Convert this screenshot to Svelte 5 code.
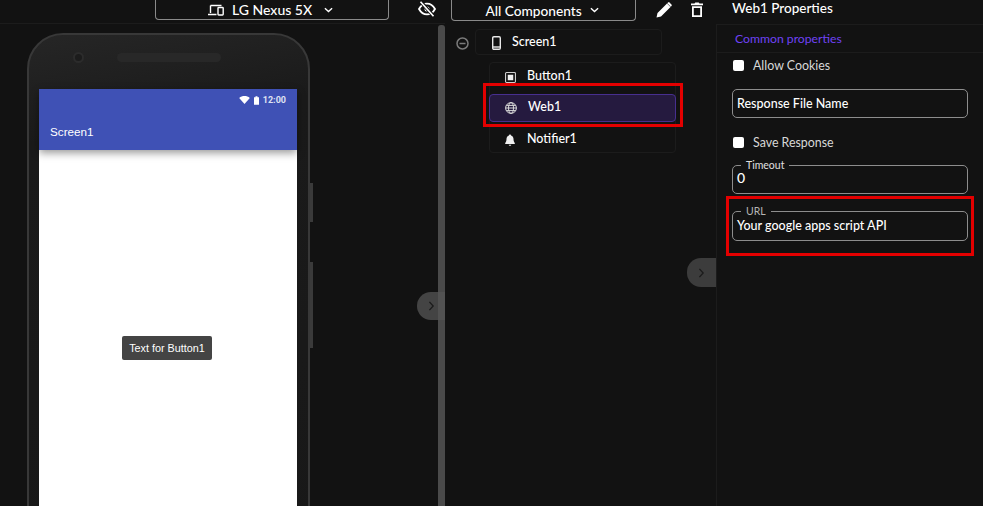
<script lang="ts">
	const children = [
		{ name: "Button1", icon: "button", selected: false },
		{ name: "Web1", icon: "web", selected: true },
		{ name: "Notifier1", icon: "bell", selected: false }
	];
</script>

<div class="app">
	<section class="viewer">
		<div class="topbar viewer-bar">
			<div class="select device-select">
				<svg class="device-icon" viewBox="0 0 16 12" width="16" height="12">
					<path d="M2.500 1.500h11M2.500 1.500v7.500M0 10.500h8.500" fill="none" stroke="#fff" stroke-width="1.400" />
					<rect x="10" y="3.500" width="5.200" height="7.500" rx=".7" fill="none" stroke="#fff" stroke-width="1.400" />
				</svg>
				<span>LG Nexus 5X</span>
				<svg class="chev" viewBox="0 0 10 6" width="9" height="6"><path d="M1 1l4 3.600L9 1" fill="none" stroke="#fff" stroke-width="1.600" /></svg>
			</div>
			<svg class="eye" viewBox="0 0 18 16" width="18" height="16">
				<path d="M1 8c2-3.600 4.800-5.400 8-5.400S15 4.400 17 8c-2 3.600-4.800 5.400-8 5.400S3 11.600 1 8z" fill="none" stroke="#fff" stroke-width="1.800" />
				<circle cx="9" cy="8" r="2.500" fill="#fff" />
				<path d="M3 1l12.500 14" stroke="#121212" stroke-width="3.500" />
				<path d="M2.500 .8l13 14.400" stroke="#fff" stroke-width="1.700" />
			</svg>
		</div>
		<div class="stage">
			<div class="phone">
				<div class="phone-top">
					<span class="camera"></span>
					<span class="speaker"></span>
				</div>
				<div class="screen">
					<div class="appbar">
						<div class="status">
							<svg viewBox="0 0 12 9" width="11" height="8"><path d="M0 2.200C3.400-.7 8.600-.7 12 2.200L6 9z" fill="#fff" /></svg>
							<svg viewBox="0 0 6 10" width="5" height="9"><path d="M1.800 0h2.400v1H6v9H0V1h1.800z" fill="#fff" /></svg>
							<span>12:00</span>
						</div>
						<div class="title">Screen1</div>
					</div>
					<div class="canvas">
						<button class="mock-button">Text for Button1</button>
					</div>
				</div>
				<span class="side-key power"></span>
				<span class="side-key volume"></span>
			</div>
			<div class="scrollbar"></div>
			<div class="collapse left-collapse">
				<svg viewBox="0 0 8 12" width="7" height="10"><path d="M1.500 1l4.500 5-4.500 5" fill="none" stroke="#1b1b1b" stroke-width="1.600" /></svg>
			</div>
		</div>
	</section>

	<section class="tree">
		<div class="topbar tree-bar">
			<div class="select tree-select">
				<span>All Components</span>
				<svg class="chev" viewBox="0 0 10 6" width="9" height="6"><path d="M1 1l4 3.600L9 1" fill="none" stroke="#fff" stroke-width="1.600" /></svg>
			</div>
			<svg viewBox="0 0 16 16" width="16" height="16"><path d="M0.500 15.500l1-4.500L11 1.500 14.500 5 5 14.500zM12 .5l1-.4 2.900 2.900-.4 1-.7.7L11.300 1.200z" fill="#fff" /></svg>
			<svg class="trash" viewBox="0 0 12 15" width="12" height="15"><path d="M0 1.500h3.500L4.300.5h3.400l.8 1H12v1.700H0zM1 4.300h10V15H1zm1.800 1.600v7.300h6.400V5.900z" fill="#fff" fill-rule="evenodd" /></svg>
		</div>
		<div class="tree-body">
			<div class="root-row">
				<svg class="minus" viewBox="0 0 13 13" width="13" height="13"><circle cx="6.500" cy="6.500" r="5.500" fill="none" stroke="#7b7b7b" stroke-width="1.500" /><path d="M3.500 6.500h6" stroke="#7b7b7b" stroke-width="1.500" /></svg>
				<div class="root-item">
					<svg viewBox="0 0 9 14" width="9" height="14"><rect x=".7" y=".7" width="7.600" height="12.600" rx="1.200" fill="none" stroke="#e8e8e8" stroke-width="1.400" /><path d="M1 11h7" stroke="#e8e8e8" stroke-width="1.400" /></svg>
					<span>Screen1</span>
				</div>
			</div>
			<div class="group">
				{#each children as child}
					<div class="item" class:selected={child.selected}>
						<span class="item-icon">
							{#if child.icon === "button"}
								<svg viewBox="0 0 12 12" width="11" height="11"><rect x=".6" y=".6" width="10.800" height="10.800" rx="1" fill="none" stroke="#cfcfcf" stroke-width="1.200" /><rect x="3" y="3" width="6" height="6" fill="#f0f0f0" /></svg>
							{:else if child.icon === "web"}
								<svg viewBox="0 0 12 12" width="12" height="12"><g fill="none" stroke="#d8d8d8"><circle cx="6" cy="6" r="5.400" /><ellipse cx="6" cy="6" rx="2.500" ry="5.400" /><path d="M.6 6h10.800M1.300 3.400h9.400M1.300 8.600h9.400" /></g></svg>
							{:else}
								<svg viewBox="0 0 10 12" width="10" height="12"><path d="M5 .5c.6 0 1 .4 1 1 1.800.5 2.500 2 2.500 3.500 0 2 .5 3 1.300 3.900V10H.2V8.900C1 8 1.500 7 1.500 5c0-1.500.7-3 2.500-3.500 0-.6.400-1 1-1zM3.800 10.700h2.400c0 .6-.5 1-1.200 1s-1.200-.4-1.200-1z" fill="#f0f0f0" /></svg>
							{/if}
						</span>
						<span class="item-name">{child.name}</span>
					</div>
				{/each}
				<div class="mark web-mark"></div>
			</div>
			<div class="collapse right-collapse">
				<svg viewBox="0 0 8 12" width="7" height="10"><path d="M1.500 1l4.500 5-4.500 5" fill="none" stroke="#1b1b1b" stroke-width="1.600" /></svg>
			</div>
		</div>
	</section>

	<section class="props">
		<div class="props-title">Web1 Properties</div>
		<div class="props-tab">Common properties</div>
		<div class="props-form">
			<label class="check first-check"><input type="checkbox" /><span>Allow Cookies</span></label>
			<div class="field plain">Response File Name</div>
			<label class="check save-check"><input type="checkbox" /><span>Save Response</span></label>
			<fieldset class="field timeout">
				<legend>Timeout</legend>
				<div class="value zero">0</div>
			</fieldset>
			<fieldset class="field url">
				<legend>URL</legend>
				<div class="value">Your google apps script API</div>
				<div class="mark url-mark"></div>
			</fieldset>
		</div>
	</section>
</div>

<style>
	:global(body) {
		margin: 0;
		background: #121212;
	}

	.app {
		display: grid;
		grid-template-columns: 445px 272px 266px;
		width: 983px;
		height: 506px;
		overflow: hidden;
		background: #121212;
		color: #fff;
		font-family: "Lato", "Liberation Sans", sans-serif;
	}

	section {
		position: relative;
		min-width: 0;
		height: 506px;
		overflow: hidden;
	}

	.topbar {
		display: flex;
		box-sizing: border-box;
		height: 24px;
		border-bottom: 1px solid #1c1c1c;
	}

	.viewer-bar {
		padding-left: 155px;
		gap: 29px;
	}

	.select {
		display: flex;
		align-items: center;
		justify-content: center;
		box-sizing: border-box;
		height: 20px;
		border: 1px solid #8a8a8a;
		border-top: 0;
		border-radius: 0 0 4px 4px;
		font-size: 14px;
		font-weight: 500;
	}

	.device-select {
		justify-content: flex-start;
		width: 234px;
		padding-left: 52px;
		gap: 8px;
	}

	.device-select .chev {
		margin-left: 4px;
	}

	.eye {
		margin-top: 1px;
	}

	.stage {
		position: relative;
		height: 482px;
		padding: 9px 0 0 27px;
	}

	.phone {
		position: relative;
		box-sizing: border-box;
		width: 283px;
		height: 560px;
		padding: 0 10px;
		border: 2px solid #383838;
		border-radius: 36px 36px 0 0;
		background: linear-gradient(170deg, #262626 0%, #1a1a1a 18%, #181818 100%);
	}

	.phone-top {
		display: flex;
		align-items: center;
		height: 54px;
		padding-bottom: 10px;
		box-sizing: border-box;
	}

	.camera {
		box-sizing: border-box;
		width: 11px;
		height: 11px;
		margin-left: 34px;
		border-radius: 50%;
		border: 2px solid #2c2c2c;
		background: #1c1c1c;
	}

	.speaker {
		width: 104px;
		height: 9px;
		margin-left: 33px;
		border-radius: 5px;
		background: #282828;
	}

	.screen {
		width: 258px;
		background: #fff;
	}

	.appbar {
		box-sizing: border-box;
		height: 61px;
		padding: 6px 11px 0;
		background: #3f51b5;
		box-shadow: 0 3px 8px rgba(0, 0, 0, 0.4);
		position: relative;
	}

	.status {
		display: flex;
		align-items: center;
		justify-content: flex-end;
		gap: 4px;
		font-family: "Roboto", sans-serif;
		font-size: 9px;
		font-weight: 700;
		color: #dfe2f2;
	}

	.title {
		margin-top: 19px;
		font-family: "Liberation Sans", sans-serif;
		font-size: 11.700px;
		line-height: 16px;
	}

	.canvas {
		display: flex;
		justify-content: center;
		height: 400px;
		padding: 186px 2px 0 0;
		box-sizing: border-box;
	}

	.mock-button {
		width: 90px;
		height: 24px;
		padding: 0;
		border: 0;
		border-radius: 2px;
		background: #444;
		color: #fff;
		font-family: "Liberation Sans", sans-serif;
		font-size: 10.800px;
	}

	.side-key {
		position: absolute;
		right: -5px;
		width: 3px;
		background: #3a3a3a;
	}

	.power {
		top: 148px;
		height: 39px;
	}

	.volume {
		top: 227px;
		height: 86px;
	}

	.scrollbar {
		position: absolute;
		top: 1px;
		right: 0;
		width: 7px;
		height: 490px;
		border-radius: 3px 3px 0 0;
		background: #4a4a4a;
	}

	.collapse {
		position: absolute;
		display: flex;
		align-items: center;
		justify-content: center;
		width: 28px;
		height: 28px;
		border-radius: 14px 0 0 14px;
		background: rgba(85, 85, 85, 0.75);
	}

	.left-collapse {
		top: 268px;
		right: 0;
	}

	.right-collapse {
		top: 234px;
		right: 0;
		width: 29px;
		height: 29px;
		background: #3c3c3c;
	}

	.tree-bar {
		padding-left: 6px;
		align-items: flex-start;
		border-bottom: 0;
	}

	.tree-select {
		width: 185px;
		height: 21px;
		padding-right: 3px;
		gap: 8px;
		margin-right: 20px;
		font-size: 13.700px;
	}

	.tree-bar svg:not(.chev) {
		margin-top: 2px;
	}

	.trash {
		margin-left: 19px;
	}

	.tree-body {
		position: relative;
		height: 482px;
		border-right: 1px solid #1c1c1c;
		box-sizing: border-box;
		padding-top: 5px;
	}

	.root-row {
		display: flex;
		align-items: center;
		padding-left: 11px;
		gap: 6px;
	}

	.minus {
		margin-top: 3px;
	}

	.root-item {
		display: flex;
		align-items: center;
		box-sizing: border-box;
		width: 187px;
		height: 26px;
		padding: 0 0 2px 16px;
		border: 1px solid #1c1c1c;
		border-radius: 4px;
		gap: 11px;
		font-size: 12.500px;
		font-weight: 500;
	}

	.root-item svg {
		margin-top: 3px;
	}

	.group {
		position: relative;
		box-sizing: border-box;
		width: 187px;
		height: 91px;
		margin: 7px 0 0 44px;
		border: 1px solid #1c1c1c;
		border-radius: 4px;
	}

	.item {
		display: flex;
		align-items: center;
		box-sizing: border-box;
		height: 31px;
		padding: 0 0 6px 14px;
		font-size: 12.500px;
		font-weight: 500;
	}

	.item:nth-child(3) {
		height: 30px;
		padding: 2px 0 0 14px;
	}

	.item-icon {
		display: flex;
		justify-content: center;
		width: 12px;
		margin: 4px 11px 0 0;
	}

	.item.selected {
		height: 28px;
		margin: 0 -1px;
		padding: 0 0 4px 15px;
		border: 1px solid #472f8f;
		border-radius: 4px;
		background: #251a3f;
	}

	.mark {
		position: absolute;
		box-sizing: border-box;
		border: 3px solid #e30000;
		pointer-events: none;
	}

	.web-mark {
		top: 20px;
		left: -7px;
		width: 200px;
		height: 44px;
	}

	.props {
		color: #fff;
	}

	.props-title {
		box-sizing: border-box;
		height: 25px;
		padding-left: 15px;
		border-bottom: 1px solid #1c1c1c;
		font-size: 13.500px;
		font-weight: 500;
		line-height: 16px;
	}

	.props-tab {
		box-sizing: border-box;
		height: 28px;
		padding: 5px 0 0 18px;
		border-bottom: 1px solid #1c1c1c;
		color: #6f42f5;
		font-size: 12.200px;
		line-height: 17px;
	}

	.props-form {
		display: flex;
		flex-direction: column;
		padding: 0 15px;
	}

	.check {
		display: flex;
		align-items: center;
		gap: 9px;
		height: 16px;
		padding-left: 1px;
		color: #d8d8d8;
		font-size: 12.400px;
	}

	.check input {
		width: 11px;
		height: 11px;
		margin: 0;
		appearance: none;
		background: #fff;
		border-radius: 2px;
	}

	.first-check {
		margin-top: 4px;
	}

	.field {
		box-sizing: border-box;
		width: 236px;
		margin: 0;
		border: 1px solid #8d8d8d;
		border-radius: 5px;
		color: #fff;
		font-size: 12.500px;
		font-weight: 500;
	}

	.plain {
		height: 29px;
		margin-top: 16px;
		padding: 6px 4px 0;
		line-height: 16px;
	}

	.save-check {
		margin-top: 16px;
	}

	fieldset.field {
		position: relative;
		padding: 0 4px;
		line-height: 16px;
	}

	.value {
		margin-top: 2px;
	}

	.value.zero {
		margin-top: 0;
		font-size: 14px;
	}

	legend {
		margin-left: 4px;
		padding: 0 5px;
		font-size: 10.500px;
		line-height: 10px;
		color: #e0e0e0;
		font-weight: 400;
	}

	.timeout {
		height: 34px;
		margin-top: 10px;
	}

	.url {
		height: 35px;
		margin-top: 12px;
	}

	.url legend {
		color: #b5b5b5;
	}

	.url-mark {
		top: -20px;
		left: -7px;
		width: 248px;
		height: 60px;
	}
</style>
